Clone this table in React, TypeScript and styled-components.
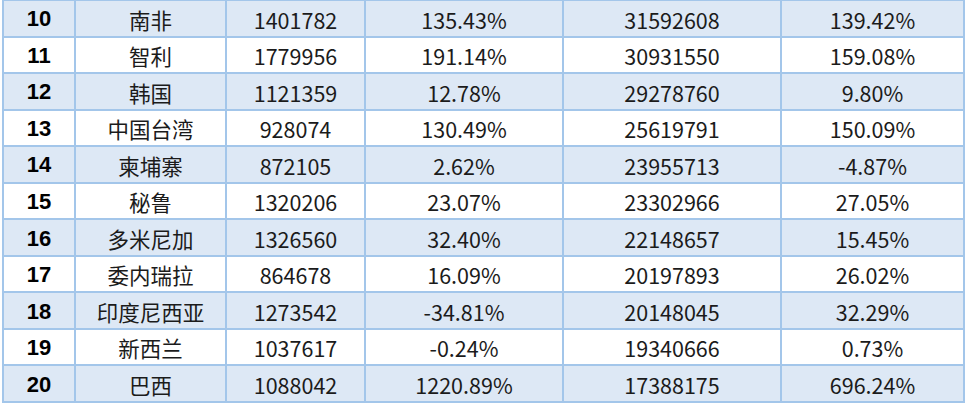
import React from "react";
import styled, { createGlobalStyle } from "styled-components";

const Global = createGlobalStyle`
  html, body { margin: 0; padding: 0; background: #ffffff; }
  body { overflow: hidden; }
`;

const Table = styled.div`
  display: grid;
  grid-template-columns: 70px 149px 137px 196px 216px 181px;
  grid-template-rows: repeat(11, 1fr);
  gap: 2px;
  padding: 2px;
  width: 963px;
  height: 404px;
  box-sizing: border-box;
  margin: -1px 0 0 2px;
  background: #a3c6ea;
`;

const Cell = styled.div<{ $alt: boolean; $rank?: boolean }>`
  display: flex;
  align-items: center;
  justify-content: center;
  padding-top: 2px;
  background: ${(p) => (p.$alt ? "#dde8f5" : "#ffffff")};
  color: ${(p) => (p.$rank ? "#000000" : "#1b1b1b")};
  font-family: ${(p) =>
    p.$rank
      ? '"Liberation Sans", Arial, sans-serif'
      : '"Noto Sans CJK SC", "Noto Sans", sans-serif'};
  font-weight: ${(p) => (p.$rank ? 700 : 400)};
  font-size: ${(p) => (p.$rank ? "22px" : "21.5px")};
  line-height: 1;
  white-space: nowrap;
`;

const rows: [string, string, string, string, string, string][] = [
  ["10", "南非", "1401782", "135.43%", "31592608", "139.42%"],
  ["11", "智利", "1779956", "191.14%", "30931550", "159.08%"],
  ["12", "韩国", "1121359", "12.78%", "29278760", "9.80%"],
  ["13", "中国台湾", "928074", "130.49%", "25619791", "150.09%"],
  ["14", "柬埔寨", "872105", "2.62%", "23955713", "-4.87%"],
  ["15", "秘鲁", "1320206", "23.07%", "23302966", "27.05%"],
  ["16", "多米尼加", "1326560", "32.40%", "22148657", "15.45%"],
  ["17", "委内瑞拉", "864678", "16.09%", "20197893", "26.02%"],
  ["18", "印度尼西亚", "1273542", "-34.81%", "20148045", "32.29%"],
  ["19", "新西兰", "1037617", "-0.24%", "19340666", "0.73%"],
  ["20", "巴西", "1088042", "1220.89%", "17388175", "696.24%"],
];

export default function App() {
  return (
    <>
      <Global />
      <Table>
        {rows.map((r, i) =>
          r.map((v, j) => (
            <Cell key={`${i}-${j}`} $alt={i % 2 === 0} $rank={j === 0}>
              {v}
            </Cell>
          ))
        )}
      </Table>
    </>
  );
}
